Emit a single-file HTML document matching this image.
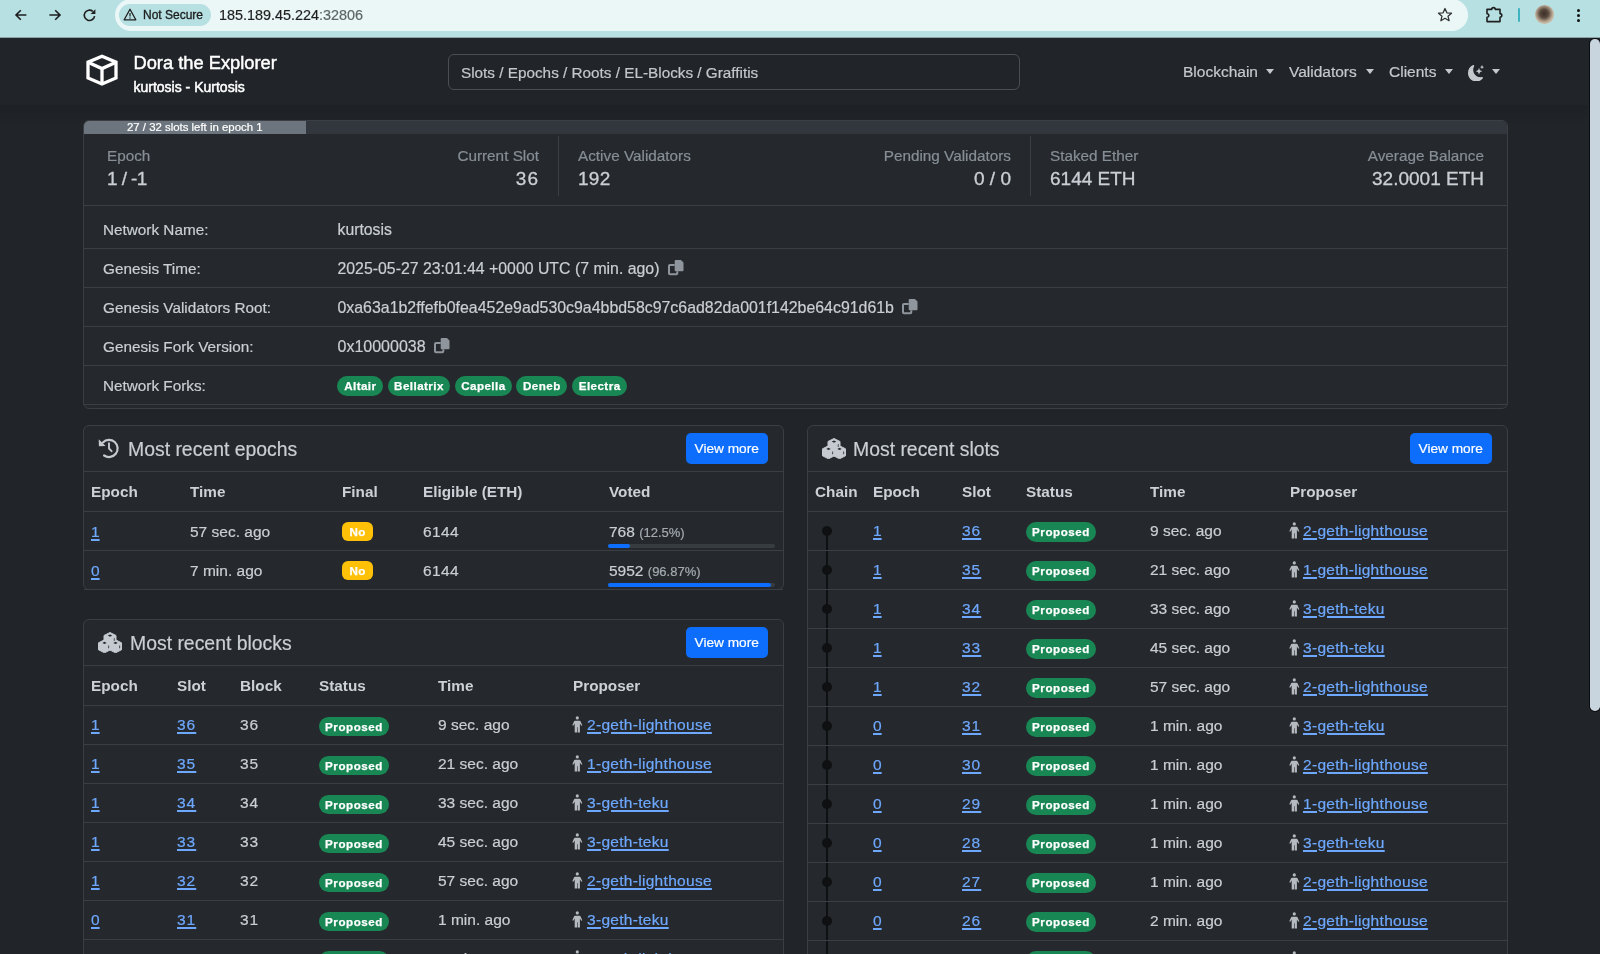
<!DOCTYPE html><html><head><meta charset="utf-8"><style>*{margin:0;padding:0;box-sizing:border-box}html,body{width:1600px;height:954px;overflow:hidden;background:#212529;font-family:"Liberation Sans",sans-serif}</style></head><body><div style="position:absolute;left:0;top:0;width:1600px;height:954px;will-change:transform">
<div style="position:absolute;left:0px;top:0px;width:1600px;height:38px;background:#b7e0e3;"></div>
<div style="position:absolute;left:115px;top:-1px;width:1353px;height:32px;background:#ebf7f7;border-radius:16px;"></div>
<div style="position:absolute;left:119px;top:4px;width:92px;height:22px;background:#b7e0e3;border-radius:11px;"></div>
<svg style="position:absolute;left:12px;top:6px" width="18" height="18" viewBox="0 0 18 18"><path d="M14.4 9H4M8.8 4.2L4 9l4.8 4.8" fill="none" stroke="#1f1f1f" stroke-width="1.6"/></svg>
<svg style="position:absolute;left:46px;top:6px" width="18" height="18" viewBox="0 0 18 18"><path d="M3.4 9h10.6M9.2 4.2L14 9l-4.8 4.8" fill="none" stroke="#1f1f1f" stroke-width="1.6"/></svg>
<svg style="position:absolute;left:80px;top:6px" width="18" height="18" viewBox="0 0 18 18"><path d="M14.6 10.2A5.2 5.2 0 1 1 12.84 5.32" fill="none" stroke="#1f1f1f" stroke-width="1.6"/><path d="M15.4 3.3V8.1H10.6Z" fill="#1f1f1f"/></svg>
<svg style="position:absolute;left:123px;top:8px" width="14" height="13" viewBox="0 0 14 13"><path d="M7 1.2L12.8 11.8H1.2Z" fill="none" stroke="#1f1f1f" stroke-width="1.3" stroke-linejoin="round"/><path d="M7 5v3.4" stroke="#1f1f1f" stroke-width="1.2"/><circle cx="7" cy="10" r=".7" fill="#1f1f1f"/></svg>
<div style="position:absolute;left:143px;top:7.84px;font-size:12px;line-height:15px;color:#1f1f1f;white-space:nowrap;-webkit-text-stroke:0.35px #1f1f1f;">Not Secure</div>
<div style="position:absolute;left:219px;top:6.01px;font-size:14.4px;line-height:18px;color:#1f1f1f;white-space:nowrap;-webkit-text-stroke-width:0.2px;">185.189.45.224<span style="color:#5d6566">:32806</span></div>
<svg style="position:absolute;left:1437px;top:7px" width="16" height="16" viewBox="0 0 16 16"><path d="M8 1.5l1.9 4.3 4.6.4-3.5 3 1.1 4.5L8 11.3 3.9 13.7 5 9.2 1.5 6.2l4.6-.4z" fill="none" stroke="#333" stroke-width="1.3" stroke-linejoin="round"/></svg>
<svg style="position:absolute;left:1485px;top:5px" width="18" height="18" viewBox="0 0 18 18"><path d="M2 4.4H6.7A1.8 1.8 0 0 1 10.3 4.4H15V8.6A1.8 1.8 0 0 1 15 12.2V16.6H2V12.3A1.8 1.8 0 0 0 2 8.7Z" fill="none" stroke="#1f1f1f" stroke-width="1.6" stroke-linejoin="round"/></svg>
<div style="position:absolute;left:1518px;top:8px;width:2px;height:14px;background:#3fb3bf;border-radius:1px;"></div>
<div style="position:absolute;left:1535px;top:5px;width:19px;height:19px;border-radius:50%;background:radial-gradient(circle at 48% 45%,#3b2f27 0,#5a4a3e 30%,#bfae98 60%,#e9dcc8 100%)"></div>
<div style="position:absolute;left:1577px;top:9px;width:3px;height:3px;background:#111;border-radius:50%;"></div>
<div style="position:absolute;left:1577px;top:14px;width:3px;height:3px;background:#111;border-radius:50%;"></div>
<div style="position:absolute;left:1577px;top:19px;width:3px;height:3px;background:#111;border-radius:50%;"></div>
<div style="position:absolute;left:0px;top:37px;width:1600px;height:1px;background:#8aa3a5;"></div>
<div style="position:absolute;left:0px;top:38px;width:1600px;height:67px;background:#212529;"></div>
<div style="position:absolute;left:0px;top:105px;width:1600px;height:21px;background:linear-gradient(#1d2024,#212529);"></div>
<svg style="position:absolute;left:85px;top:53px" width="34" height="34" viewBox="0 0 34 34"><path d="M17 3.2L31 9.2V25L17 31L3 25V9.2Z" fill="none" stroke="#fff" stroke-width="3.3" stroke-linejoin="miter"/><path d="M3.5 9.6L17 15.6L30.5 9.6M17 15.6V31" fill="none" stroke="#fff" stroke-width="3.3"/></svg>
<div style="position:absolute;left:133.5px;top:51.36px;font-size:18.3px;line-height:23px;color:#fff;white-space:nowrap;-webkit-text-stroke:0.45px #fff;">Dora the Explorer</div>
<div style="position:absolute;left:133.5px;top:77.65px;font-size:14px;line-height:18px;color:#fff;white-space:nowrap;-webkit-text-stroke:0.5px #fff;">kurtosis - Kurtosis</div>
<div style="position:absolute;left:448px;top:54px;width:572px;height:36px;background:#212529;border:1px solid #4a4f54;border-radius:6px;box-sizing:border-box;"></div>
<div style="position:absolute;left:461px;top:62.90px;font-size:15.3px;line-height:19px;color:#c3c8cd;white-space:nowrap;-webkit-text-stroke-width:0.2px;">Slots / Epochs / Roots / EL-Blocks / Graffitis</div>
<div style="position:absolute;left:1183px;top:62.03px;font-size:15.5px;line-height:19px;color:#c6c9cc;white-space:nowrap;-webkit-text-stroke-width:0.2px;">Blockchain</div>
<div style="position:absolute;left:1265.5px;top:68.5px;width:0;height:0;border-left:4.2px solid transparent;border-right:4.2px solid transparent;border-top:5px solid #c6c9cc"></div>
<div style="position:absolute;left:1289px;top:62.03px;font-size:15.5px;line-height:19px;color:#c6c9cc;white-space:nowrap;-webkit-text-stroke-width:0.2px;">Validators</div>
<div style="position:absolute;left:1365.5px;top:68.5px;width:0;height:0;border-left:4.2px solid transparent;border-right:4.2px solid transparent;border-top:5px solid #c6c9cc"></div>
<div style="position:absolute;left:1389px;top:62.03px;font-size:15.5px;line-height:19px;color:#c6c9cc;white-space:nowrap;-webkit-text-stroke-width:0.2px;">Clients</div>
<div style="position:absolute;left:1444.5px;top:68.5px;width:0;height:0;border-left:4.2px solid transparent;border-right:4.2px solid transparent;border-top:5px solid #c6c9cc"></div>
<svg style="position:absolute;left:1467.5px;top:64.8px" width="16" height="16.5" viewBox="0 0 16 16" preserveAspectRatio="none"><path d="M6 .278a.768.768 0 0 1 .08.858 7.208 7.208 0 0 0-.878 3.46c0 4.021 3.278 7.277 7.318 7.277.527 0 1.04-.055 1.533-.16a.787.787 0 0 1 .81.316.733.733 0 0 1-.031.893A8.349 8.349 0 0 1 8.344 16C3.734 16 0 12.286 0 7.71 0 4.266 2.114 1.312 5.124.06A.752.752 0 0 1 6 .278z" fill="#c6c9cc"/><path d="M10.794 3.148a.217.217 0 0 1 .412 0l.387 1.162c.173.518.579.924 1.097 1.097l1.162.387a.217.217 0 0 1 0 .412l-1.162.387a1.734 1.734 0 0 0-1.097 1.097l-.387 1.162a.217.217 0 0 1-.412 0l-.387-1.162A1.734 1.734 0 0 0 9.31 6.593l-1.162-.387a.217.217 0 0 1 0-.412l1.162-.387a1.734 1.734 0 0 0 1.097-1.097l.387-1.162zM13.863.099a.145.145 0 0 1 .274 0l.258.774c.115.346.386.617.732.732l.774.258a.145.145 0 0 1 0 .274l-.774.258a1.156 1.156 0 0 0-.732.732l-.258.774a.145.145 0 0 1-.274 0l-.258-.774a1.156 1.156 0 0 0-.732-.732l-.774-.258a.145.145 0 0 1 0-.274l.774-.258c.346-.115.617-.386.732-.732L13.863.1z" fill="#c6c9cc"/></svg>
<div style="position:absolute;left:1491.5px;top:68.5px;width:0;height:0;border-left:4.2px solid transparent;border-right:4.2px solid transparent;border-top:5px solid #c6c9cc"></div>
<div style="position:absolute;left:1588px;top:38px;width:12px;height:916px;background:#212529;"></div>
<div style="position:absolute;left:1590px;top:38.5px;width:9.6px;height:672.5px;background:#c8d4de;border-radius:4.8px;box-shadow:0 0 0 1px #0c0e10;"></div>
<div style="position:absolute;left:83px;top:120px;width:1425px;height:289px;background:#25292d;border:1px solid #3b3f44;border-radius:6px;overflow:hidden;box-sizing:border-box">
<div style="position:absolute;left:0;top:0;width:1425px;height:13px;background:#32373d"></div>
<div style="position:absolute;left:0;top:0;width:222px;height:13px;background:#6c757d"></div>
</div>
<div style="position:absolute;left:127px;top:120.05px;font-size:11.4px;line-height:14px;color:#fff;white-space:nowrap;-webkit-text-stroke-width:0.2px;">27 / 32 slots left in epoch 1</div>
<div style="position:absolute;left:107px;top:146.00px;font-size:15.3px;line-height:19px;color:#868e96;white-space:nowrap;-webkit-text-stroke-width:0.2px;">Epoch</div>
<div style="position:absolute;left:107px;top:166.61px;font-size:19px;line-height:24px;color:#c9cfd4;white-space:nowrap;-webkit-text-stroke:0.3px #ced4da;letter-spacing:-0.6px;">1 / -1</div>
<div style="position:absolute;right:1061px;top:146.00px;font-size:15.3px;line-height:19px;color:#868e96;white-space:nowrap;-webkit-text-stroke-width:0.2px;">Current Slot</div>
<div style="position:absolute;right:1061px;top:166.61px;font-size:19px;line-height:24px;color:#c9cfd4;white-space:nowrap;-webkit-text-stroke:0.3px #ced4da;letter-spacing:1px;">36</div>
<div style="position:absolute;left:558px;top:136px;width:1px;height:60px;background:#3b3f44;"></div>
<div style="position:absolute;left:578px;top:146.00px;font-size:15.3px;line-height:19px;color:#868e96;white-space:nowrap;-webkit-text-stroke-width:0.2px;">Active Validators</div>
<div style="position:absolute;left:578px;top:166.61px;font-size:19px;line-height:24px;color:#c9cfd4;white-space:nowrap;-webkit-text-stroke:0.3px #ced4da;letter-spacing:0.3px;">192</div>
<div style="position:absolute;right:589px;top:146.00px;font-size:15.3px;line-height:19px;color:#868e96;white-space:nowrap;-webkit-text-stroke-width:0.2px;">Pending Validators</div>
<div style="position:absolute;right:589px;top:166.61px;font-size:19px;line-height:24px;color:#c9cfd4;white-space:nowrap;-webkit-text-stroke:0.3px #ced4da;">0 / 0</div>
<div style="position:absolute;left:1030px;top:136px;width:1px;height:60px;background:#3b3f44;"></div>
<div style="position:absolute;left:1050px;top:146.00px;font-size:15.3px;line-height:19px;color:#868e96;white-space:nowrap;-webkit-text-stroke-width:0.2px;">Staked Ether</div>
<div style="position:absolute;left:1050px;top:166.61px;font-size:19px;line-height:24px;color:#c9cfd4;white-space:nowrap;-webkit-text-stroke:0.3px #ced4da;">6144 ETH</div>
<div style="position:absolute;right:116px;top:146.00px;font-size:15.3px;line-height:19px;color:#868e96;white-space:nowrap;-webkit-text-stroke-width:0.2px;">Average Balance</div>
<div style="position:absolute;right:116px;top:166.61px;font-size:19px;line-height:24px;color:#c9cfd4;white-space:nowrap;-webkit-text-stroke:0.3px #ced4da;">32.0001 ETH</div>
<div style="position:absolute;left:84px;top:205px;width:1423px;height:1px;background:#3b3f44;"></div>
<div style="position:absolute;left:84px;top:248px;width:1423px;height:1px;background:#3b3f44;"></div>
<div style="position:absolute;left:84px;top:287px;width:1423px;height:1px;background:#3b3f44;"></div>
<div style="position:absolute;left:84px;top:326px;width:1423px;height:1px;background:#3b3f44;"></div>
<div style="position:absolute;left:84px;top:365px;width:1423px;height:1px;background:#3b3f44;"></div>
<div style="position:absolute;left:84px;top:404px;width:1423px;height:1px;background:#3b3f44;"></div>
<div style="position:absolute;left:103px;top:219.60px;font-size:15.3px;line-height:19px;color:#c9cfd4;white-space:nowrap;-webkit-text-stroke-width:0.2px;">Network Name:</div>
<div style="position:absolute;left:337.5px;top:219.72px;font-size:15.8px;line-height:20px;color:#c9cfd4;white-space:nowrap;-webkit-text-stroke-width:0.2px;">kurtosis</div>
<div style="position:absolute;left:103px;top:258.60px;font-size:15.3px;line-height:19px;color:#c9cfd4;white-space:nowrap;-webkit-text-stroke-width:0.2px;">Genesis Time:</div>
<div style="position:absolute;left:337.5px;top:258.71px;font-size:15.85px;line-height:20px;color:#c9cfd4;white-space:nowrap;-webkit-text-stroke-width:0.2px;">2025-05-27 23:01:44 +0000 UTC (7 min. ago)</div>
<svg style="position:absolute;left:668px;top:260.3px" width="16" height="16" viewBox="0 0 16 16"><path d="M7.7 0H12.9L15.5 2.6V10.2A1 1 0 0 1 14.5 11.2H7.7A1 1 0 0 1 6.7 10.2V1A1 1 0 0 1 7.7 0Z" fill="#8e959c"/><path d="M6.7 4.9H2A1 1 0 0 0 1 5.9V13.2A1 1 0 0 0 2 14.2H8.3A1 1 0 0 0 9.3 13.2V11.2" fill="none" stroke="#8e959c" stroke-width="2"/></svg>
<div style="position:absolute;left:103px;top:297.60px;font-size:15.3px;line-height:19px;color:#c9cfd4;white-space:nowrap;-webkit-text-stroke-width:0.2px;">Genesis Validators Root:</div>
<div style="position:absolute;left:337.5px;top:297.69px;font-size:15.9px;line-height:20px;color:#c9cfd4;white-space:nowrap;-webkit-text-stroke-width:0.2px;">0xa63a1b2ffefb0fea452e9ad530c9a4bbd58c97c6ad82da001f142be64c91d61b</div>
<svg style="position:absolute;left:902px;top:299.2px" width="16" height="16" viewBox="0 0 16 16"><path d="M7.7 0H12.9L15.5 2.6V10.2A1 1 0 0 1 14.5 11.2H7.7A1 1 0 0 1 6.7 10.2V1A1 1 0 0 1 7.7 0Z" fill="#8e959c"/><path d="M6.7 4.9H2A1 1 0 0 0 1 5.9V13.2A1 1 0 0 0 2 14.2H8.3A1 1 0 0 0 9.3 13.2V11.2" fill="none" stroke="#8e959c" stroke-width="2"/></svg>
<div style="position:absolute;left:103px;top:336.60px;font-size:15.3px;line-height:19px;color:#c9cfd4;white-space:nowrap;-webkit-text-stroke-width:0.2px;">Genesis Fork Version:</div>
<div style="position:absolute;left:337.5px;top:336.65px;font-size:16px;line-height:20px;color:#c9cfd4;white-space:nowrap;-webkit-text-stroke-width:0.2px;">0x10000038</div>
<svg style="position:absolute;left:434px;top:338px" width="16" height="16" viewBox="0 0 16 16"><path d="M7.7 0H12.9L15.5 2.6V10.2A1 1 0 0 1 14.5 11.2H7.7A1 1 0 0 1 6.7 10.2V1A1 1 0 0 1 7.7 0Z" fill="#8e959c"/><path d="M6.7 4.9H2A1 1 0 0 0 1 5.9V13.2A1 1 0 0 0 2 14.2H8.3A1 1 0 0 0 9.3 13.2V11.2" fill="none" stroke="#8e959c" stroke-width="2"/></svg>
<div style="position:absolute;left:103px;top:375.60px;font-size:15.3px;line-height:19px;color:#c9cfd4;white-space:nowrap;-webkit-text-stroke-width:0.2px;">Network Forks:</div>
<div style="position:absolute;left:337.4px;top:376.4px;width:45.9px;height:19.5px;border-radius:10px;background:#198754;color:#fff;font-weight:bold;font-size:11.6px;line-height:19.5px;text-align:center;letter-spacing:0.45px;-webkit-text-stroke:0.25px #fff">Altair</div>
<div style="position:absolute;left:387.8px;top:376.4px;width:62.4px;height:19.5px;border-radius:10px;background:#198754;color:#fff;font-weight:bold;font-size:11.6px;line-height:19.5px;text-align:center;letter-spacing:0.45px;-webkit-text-stroke:0.25px #fff">Bellatrix</div>
<div style="position:absolute;left:454.6px;top:376.4px;width:57.6px;height:19.5px;border-radius:10px;background:#198754;color:#fff;font-weight:bold;font-size:11.6px;line-height:19.5px;text-align:center;letter-spacing:0.45px;-webkit-text-stroke:0.25px #fff">Capella</div>
<div style="position:absolute;left:516.4px;top:376.4px;width:51.0px;height:19.5px;border-radius:10px;background:#198754;color:#fff;font-weight:bold;font-size:11.6px;line-height:19.5px;text-align:center;letter-spacing:0.45px;-webkit-text-stroke:0.25px #fff">Deneb</div>
<div style="position:absolute;left:572.2px;top:376.4px;width:54.9px;height:19.5px;border-radius:10px;background:#198754;color:#fff;font-weight:bold;font-size:11.6px;line-height:19.5px;text-align:center;letter-spacing:0.45px;-webkit-text-stroke:0.25px #fff">Electra</div>
<div style="position:absolute;left:83px;top:425px;width:701px;height:165px;background:#25292d;border:1px solid #3b3f44;border-radius:6px;box-sizing:border-box"></div>
<svg style="position:absolute;left:97.5px;top:438px" width="22" height="22" viewBox="0 0 22 22"><path d="M4.9 4.4A8.6 8.6 0 1 1 6.1 17.5" fill="none" stroke="#c4cad0" stroke-width="2.2" stroke-linecap="round"/><path d="M0.7 1.3L0.9 8.2L7.6 8Z" fill="#c4cad0"/><path d="M11 5.3V10.5L13.6 13.2" fill="none" stroke="#c4cad0" stroke-width="1.9" stroke-linecap="round" stroke-linejoin="round"/></svg>
<div style="position:absolute;left:128px;top:436.67px;font-size:19.4px;line-height:24px;color:#c9cfd4;white-space:nowrap;-webkit-text-stroke-width:0.2px;">Most recent epochs</div>
<div style="position:absolute;left:686px;top:433px;width:82px;height:31px;border-radius:5px;background:#0d6efd"></div>
<div style="position:absolute;left:694.5px;top:440.15px;font-size:13.7px;line-height:17px;color:#fff;white-space:nowrap;-webkit-text-stroke:0.2px #fff;">View more</div>
<div style="position:absolute;left:84px;top:471px;width:699px;height:1px;background:#3b3f44;"></div>
<div style="position:absolute;left:91px;top:482.40px;font-size:15.3px;line-height:19px;color:#cbd1d6;font-weight:bold;white-space:nowrap;">Epoch</div>
<div style="position:absolute;left:190px;top:482.40px;font-size:15.3px;line-height:19px;color:#cbd1d6;font-weight:bold;white-space:nowrap;">Time</div>
<div style="position:absolute;left:342px;top:482.40px;font-size:15.3px;line-height:19px;color:#cbd1d6;font-weight:bold;white-space:nowrap;">Final</div>
<div style="position:absolute;left:423px;top:482.40px;font-size:15.3px;line-height:19px;color:#cbd1d6;font-weight:bold;white-space:nowrap;">Eligible (ETH)</div>
<div style="position:absolute;left:609px;top:482.40px;font-size:15.3px;line-height:19px;color:#cbd1d6;font-weight:bold;white-space:nowrap;">Voted</div>
<div style="position:absolute;left:84px;top:511px;width:699px;height:1px;background:#3b3f44;"></div>
<div style="position:absolute;left:84px;top:550px;width:699px;height:1px;background:#3b3f44;"></div>
<div style="position:absolute;left:84px;top:589px;width:699px;height:1px;background:#3b3f44;"></div>
<div style="position:absolute;left:91px;top:521.73px;font-size:15.5px;line-height:19px;color:#6ea8fe;white-space:nowrap;-webkit-text-stroke-width:0.2px;letter-spacing:0px;text-decoration:underline;text-underline-offset:1.5px;text-decoration-thickness:1.6px;">1</div>
<div style="position:absolute;left:190px;top:521.73px;font-size:15.5px;line-height:19px;color:#c9cfd4;white-space:nowrap;-webkit-text-stroke-width:0.2px;">57 sec. ago</div>
<div style="position:absolute;left:342px;top:521.7px;width:31px;height:19.5px;border-radius:6px;background:#ffc107;color:#fff;font-weight:bold;font-size:11.6px;line-height:19.5px;text-align:center;letter-spacing:0.3px;-webkit-text-stroke:0.25px #fff">No</div>
<div style="position:absolute;left:423px;top:521.73px;font-size:15.5px;line-height:19px;color:#c9cfd4;white-space:nowrap;-webkit-text-stroke-width:0.2px;letter-spacing:0.4px;">6144</div>
<div style="position:absolute;left:609px;top:521.73px;font-size:15.5px;line-height:19px;color:#c9cfd4;white-space:nowrap;-webkit-text-stroke-width:0.2px;">768 <span style="font-size:13px;color:#a4abb1">(12.5%)</span></div>
<div style="position:absolute;left:608px;top:544px;width:167px;height:4px;background:#373c41;border-radius:2px;"></div>
<div style="position:absolute;left:608px;top:544px;width:22px;height:4px;background:#0d6efd;border-radius:2px;"></div>
<div style="position:absolute;left:91px;top:560.73px;font-size:15.5px;line-height:19px;color:#6ea8fe;white-space:nowrap;-webkit-text-stroke-width:0.2px;letter-spacing:0px;text-decoration:underline;text-underline-offset:1.5px;text-decoration-thickness:1.6px;">0</div>
<div style="position:absolute;left:190px;top:560.73px;font-size:15.5px;line-height:19px;color:#c9cfd4;white-space:nowrap;-webkit-text-stroke-width:0.2px;">7 min. ago</div>
<div style="position:absolute;left:342px;top:560.7px;width:31px;height:19.5px;border-radius:6px;background:#ffc107;color:#fff;font-weight:bold;font-size:11.6px;line-height:19.5px;text-align:center;letter-spacing:0.3px;-webkit-text-stroke:0.25px #fff">No</div>
<div style="position:absolute;left:423px;top:560.73px;font-size:15.5px;line-height:19px;color:#c9cfd4;white-space:nowrap;-webkit-text-stroke-width:0.2px;letter-spacing:0.4px;">6144</div>
<div style="position:absolute;left:609px;top:560.73px;font-size:15.5px;line-height:19px;color:#c9cfd4;white-space:nowrap;-webkit-text-stroke-width:0.2px;">5952 <span style="font-size:13px;color:#a4abb1">(96.87%)</span></div>
<div style="position:absolute;left:608px;top:583px;width:167px;height:4px;background:#373c41;border-radius:2px;"></div>
<div style="position:absolute;left:608px;top:583px;width:163px;height:4px;background:#0d6efd;border-radius:2px;"></div>
<div style="position:absolute;left:83px;top:619px;width:701px;height:400px;background:#25292d;border:1px solid #3b3f44;border-radius:6px;box-sizing:border-box"></div>
<svg style="position:absolute;left:98px;top:632px" width="24" height="21" viewBox="-0.5 -0.5 24 21"><path d="M11.5 0L17.5 3V10L11.5 13L5.5 10V3ZM6 7.3L12 10.3V17.3L6 20.3L0 17.3V10.3ZM17 7.3L23 10.3V17.3L17 20.3L11 17.3V10.3Z" fill="#c4cad0" stroke="#c4cad0" stroke-width="1" stroke-linejoin="round"/><path d="M11.5 2L13.7 3.1L11.5 4.2L9.3 3.1Z" fill="#25292d"/><path d="M15.3 5.9L16.1 5.5V8.2L15.3 8.6Z" fill="#25292d"/><path d="M6 9.3L8.2 10.4L6 11.5L3.8 10.4Z" fill="#25292d"/><path d="M9.8 13.2L10.6 12.8V15.5L9.8 15.899999999999999Z" fill="#25292d"/><path d="M17 9.3L19.2 10.4L17 11.5L14.8 10.4Z" fill="#25292d"/><path d="M20.8 13.2L21.6 12.8V15.5L20.8 15.899999999999999Z" fill="#25292d"/></svg>
<div style="position:absolute;left:130px;top:630.67px;font-size:19.4px;line-height:24px;color:#c9cfd4;white-space:nowrap;-webkit-text-stroke-width:0.2px;">Most recent blocks</div>
<div style="position:absolute;left:686px;top:627px;width:82px;height:31px;border-radius:5px;background:#0d6efd"></div>
<div style="position:absolute;left:694.5px;top:634.15px;font-size:13.7px;line-height:17px;color:#fff;white-space:nowrap;-webkit-text-stroke:0.2px #fff;">View more</div>
<div style="position:absolute;left:84px;top:665px;width:699px;height:1px;background:#3b3f44;"></div>
<div style="position:absolute;left:91px;top:676.40px;font-size:15.3px;line-height:19px;color:#cbd1d6;font-weight:bold;white-space:nowrap;">Epoch</div>
<div style="position:absolute;left:177px;top:676.40px;font-size:15.3px;line-height:19px;color:#cbd1d6;font-weight:bold;white-space:nowrap;">Slot</div>
<div style="position:absolute;left:240px;top:676.40px;font-size:15.3px;line-height:19px;color:#cbd1d6;font-weight:bold;white-space:nowrap;">Block</div>
<div style="position:absolute;left:319px;top:676.40px;font-size:15.3px;line-height:19px;color:#cbd1d6;font-weight:bold;white-space:nowrap;">Status</div>
<div style="position:absolute;left:438px;top:676.40px;font-size:15.3px;line-height:19px;color:#cbd1d6;font-weight:bold;white-space:nowrap;">Time</div>
<div style="position:absolute;left:573px;top:676.40px;font-size:15.3px;line-height:19px;color:#cbd1d6;font-weight:bold;white-space:nowrap;">Proposer</div>
<div style="position:absolute;left:84px;top:705px;width:699px;height:1px;background:#3b3f44;"></div>
<div style="position:absolute;left:91px;top:715.13px;font-size:15.5px;line-height:19px;color:#6ea8fe;white-space:nowrap;-webkit-text-stroke-width:0.2px;letter-spacing:0px;text-decoration:underline;text-underline-offset:1.5px;text-decoration-thickness:1.6px;">1</div>
<div style="position:absolute;left:177px;top:715.13px;font-size:15.5px;line-height:19px;color:#6ea8fe;white-space:nowrap;-webkit-text-stroke-width:0.2px;letter-spacing:1px;text-decoration:underline;text-underline-offset:1.5px;text-decoration-thickness:1.6px;">36</div>
<div style="position:absolute;left:240px;top:715.13px;font-size:15.5px;line-height:19px;color:#c9cfd4;white-space:nowrap;-webkit-text-stroke-width:0.2px;letter-spacing:1px;">36</div>
<div style="position:absolute;left:319px;top:716.5px;width:70px;height:19.5px;border-radius:10px;background:#198754;color:#fff;font-weight:bold;font-size:11.6px;line-height:19.5px;text-align:center;letter-spacing:0.55px;-webkit-text-stroke:0.25px #fff">Proposed</div>
<div style="position:absolute;left:438px;top:715.13px;font-size:15.5px;line-height:19px;color:#c9cfd4;white-space:nowrap;-webkit-text-stroke-width:0.2px;">9 sec. ago</div>
<svg style="position:absolute;left:572px;top:715.5px" width="11" height="17" viewBox="0 0 11 17"><circle cx="5.3" cy="1.9" r="1.6" fill="#b4bac0"/><path d="M3 4.8H7.6C8.1 4.8 8.4 5.1 8.6 5.5L10.3 9.2L9.3 9.8L7.9 7.6V16.4H5.6V11.2H5V16.4H2.7V7.6L1.3 9.8L0.3 9.2L2 5.5C2.2 5.1 2.5 4.8 3 4.8Z" fill="#b4bac0"/></svg>
<div style="position:absolute;left:587px;top:715.13px;font-size:15.5px;line-height:19px;color:#6ea8fe;white-space:nowrap;-webkit-text-stroke-width:0.2px;letter-spacing:0.3px;text-decoration:underline;text-underline-offset:1.5px;text-decoration-thickness:1.6px;">2-geth-lighthouse</div>
<div style="position:absolute;left:84px;top:744px;width:699px;height:1px;background:#3b3f44;"></div>
<div style="position:absolute;left:91px;top:754.13px;font-size:15.5px;line-height:19px;color:#6ea8fe;white-space:nowrap;-webkit-text-stroke-width:0.2px;letter-spacing:0px;text-decoration:underline;text-underline-offset:1.5px;text-decoration-thickness:1.6px;">1</div>
<div style="position:absolute;left:177px;top:754.13px;font-size:15.5px;line-height:19px;color:#6ea8fe;white-space:nowrap;-webkit-text-stroke-width:0.2px;letter-spacing:1px;text-decoration:underline;text-underline-offset:1.5px;text-decoration-thickness:1.6px;">35</div>
<div style="position:absolute;left:240px;top:754.13px;font-size:15.5px;line-height:19px;color:#c9cfd4;white-space:nowrap;-webkit-text-stroke-width:0.2px;letter-spacing:1px;">35</div>
<div style="position:absolute;left:319px;top:755.5px;width:70px;height:19.5px;border-radius:10px;background:#198754;color:#fff;font-weight:bold;font-size:11.6px;line-height:19.5px;text-align:center;letter-spacing:0.55px;-webkit-text-stroke:0.25px #fff">Proposed</div>
<div style="position:absolute;left:438px;top:754.13px;font-size:15.5px;line-height:19px;color:#c9cfd4;white-space:nowrap;-webkit-text-stroke-width:0.2px;">21 sec. ago</div>
<svg style="position:absolute;left:572px;top:754.5px" width="11" height="17" viewBox="0 0 11 17"><circle cx="5.3" cy="1.9" r="1.6" fill="#b4bac0"/><path d="M3 4.8H7.6C8.1 4.8 8.4 5.1 8.6 5.5L10.3 9.2L9.3 9.8L7.9 7.6V16.4H5.6V11.2H5V16.4H2.7V7.6L1.3 9.8L0.3 9.2L2 5.5C2.2 5.1 2.5 4.8 3 4.8Z" fill="#b4bac0"/></svg>
<div style="position:absolute;left:587px;top:754.13px;font-size:15.5px;line-height:19px;color:#6ea8fe;white-space:nowrap;-webkit-text-stroke-width:0.2px;letter-spacing:0.3px;text-decoration:underline;text-underline-offset:1.5px;text-decoration-thickness:1.6px;">1-geth-lighthouse</div>
<div style="position:absolute;left:84px;top:783px;width:699px;height:1px;background:#3b3f44;"></div>
<div style="position:absolute;left:91px;top:793.13px;font-size:15.5px;line-height:19px;color:#6ea8fe;white-space:nowrap;-webkit-text-stroke-width:0.2px;letter-spacing:0px;text-decoration:underline;text-underline-offset:1.5px;text-decoration-thickness:1.6px;">1</div>
<div style="position:absolute;left:177px;top:793.13px;font-size:15.5px;line-height:19px;color:#6ea8fe;white-space:nowrap;-webkit-text-stroke-width:0.2px;letter-spacing:1px;text-decoration:underline;text-underline-offset:1.5px;text-decoration-thickness:1.6px;">34</div>
<div style="position:absolute;left:240px;top:793.13px;font-size:15.5px;line-height:19px;color:#c9cfd4;white-space:nowrap;-webkit-text-stroke-width:0.2px;letter-spacing:1px;">34</div>
<div style="position:absolute;left:319px;top:794.5px;width:70px;height:19.5px;border-radius:10px;background:#198754;color:#fff;font-weight:bold;font-size:11.6px;line-height:19.5px;text-align:center;letter-spacing:0.55px;-webkit-text-stroke:0.25px #fff">Proposed</div>
<div style="position:absolute;left:438px;top:793.13px;font-size:15.5px;line-height:19px;color:#c9cfd4;white-space:nowrap;-webkit-text-stroke-width:0.2px;">33 sec. ago</div>
<svg style="position:absolute;left:572px;top:793.5px" width="11" height="17" viewBox="0 0 11 17"><circle cx="5.3" cy="1.9" r="1.6" fill="#b4bac0"/><path d="M3 4.8H7.6C8.1 4.8 8.4 5.1 8.6 5.5L10.3 9.2L9.3 9.8L7.9 7.6V16.4H5.6V11.2H5V16.4H2.7V7.6L1.3 9.8L0.3 9.2L2 5.5C2.2 5.1 2.5 4.8 3 4.8Z" fill="#b4bac0"/></svg>
<div style="position:absolute;left:587px;top:793.13px;font-size:15.5px;line-height:19px;color:#6ea8fe;white-space:nowrap;-webkit-text-stroke-width:0.2px;letter-spacing:0.3px;text-decoration:underline;text-underline-offset:1.5px;text-decoration-thickness:1.6px;">3-geth-teku</div>
<div style="position:absolute;left:84px;top:822px;width:699px;height:1px;background:#3b3f44;"></div>
<div style="position:absolute;left:91px;top:832.13px;font-size:15.5px;line-height:19px;color:#6ea8fe;white-space:nowrap;-webkit-text-stroke-width:0.2px;letter-spacing:0px;text-decoration:underline;text-underline-offset:1.5px;text-decoration-thickness:1.6px;">1</div>
<div style="position:absolute;left:177px;top:832.13px;font-size:15.5px;line-height:19px;color:#6ea8fe;white-space:nowrap;-webkit-text-stroke-width:0.2px;letter-spacing:1px;text-decoration:underline;text-underline-offset:1.5px;text-decoration-thickness:1.6px;">33</div>
<div style="position:absolute;left:240px;top:832.13px;font-size:15.5px;line-height:19px;color:#c9cfd4;white-space:nowrap;-webkit-text-stroke-width:0.2px;letter-spacing:1px;">33</div>
<div style="position:absolute;left:319px;top:833.5px;width:70px;height:19.5px;border-radius:10px;background:#198754;color:#fff;font-weight:bold;font-size:11.6px;line-height:19.5px;text-align:center;letter-spacing:0.55px;-webkit-text-stroke:0.25px #fff">Proposed</div>
<div style="position:absolute;left:438px;top:832.13px;font-size:15.5px;line-height:19px;color:#c9cfd4;white-space:nowrap;-webkit-text-stroke-width:0.2px;">45 sec. ago</div>
<svg style="position:absolute;left:572px;top:832.5px" width="11" height="17" viewBox="0 0 11 17"><circle cx="5.3" cy="1.9" r="1.6" fill="#b4bac0"/><path d="M3 4.8H7.6C8.1 4.8 8.4 5.1 8.6 5.5L10.3 9.2L9.3 9.8L7.9 7.6V16.4H5.6V11.2H5V16.4H2.7V7.6L1.3 9.8L0.3 9.2L2 5.5C2.2 5.1 2.5 4.8 3 4.8Z" fill="#b4bac0"/></svg>
<div style="position:absolute;left:587px;top:832.13px;font-size:15.5px;line-height:19px;color:#6ea8fe;white-space:nowrap;-webkit-text-stroke-width:0.2px;letter-spacing:0.3px;text-decoration:underline;text-underline-offset:1.5px;text-decoration-thickness:1.6px;">3-geth-teku</div>
<div style="position:absolute;left:84px;top:861px;width:699px;height:1px;background:#3b3f44;"></div>
<div style="position:absolute;left:91px;top:871.13px;font-size:15.5px;line-height:19px;color:#6ea8fe;white-space:nowrap;-webkit-text-stroke-width:0.2px;letter-spacing:0px;text-decoration:underline;text-underline-offset:1.5px;text-decoration-thickness:1.6px;">1</div>
<div style="position:absolute;left:177px;top:871.13px;font-size:15.5px;line-height:19px;color:#6ea8fe;white-space:nowrap;-webkit-text-stroke-width:0.2px;letter-spacing:1px;text-decoration:underline;text-underline-offset:1.5px;text-decoration-thickness:1.6px;">32</div>
<div style="position:absolute;left:240px;top:871.13px;font-size:15.5px;line-height:19px;color:#c9cfd4;white-space:nowrap;-webkit-text-stroke-width:0.2px;letter-spacing:1px;">32</div>
<div style="position:absolute;left:319px;top:872.5px;width:70px;height:19.5px;border-radius:10px;background:#198754;color:#fff;font-weight:bold;font-size:11.6px;line-height:19.5px;text-align:center;letter-spacing:0.55px;-webkit-text-stroke:0.25px #fff">Proposed</div>
<div style="position:absolute;left:438px;top:871.13px;font-size:15.5px;line-height:19px;color:#c9cfd4;white-space:nowrap;-webkit-text-stroke-width:0.2px;">57 sec. ago</div>
<svg style="position:absolute;left:572px;top:871.5px" width="11" height="17" viewBox="0 0 11 17"><circle cx="5.3" cy="1.9" r="1.6" fill="#b4bac0"/><path d="M3 4.8H7.6C8.1 4.8 8.4 5.1 8.6 5.5L10.3 9.2L9.3 9.8L7.9 7.6V16.4H5.6V11.2H5V16.4H2.7V7.6L1.3 9.8L0.3 9.2L2 5.5C2.2 5.1 2.5 4.8 3 4.8Z" fill="#b4bac0"/></svg>
<div style="position:absolute;left:587px;top:871.13px;font-size:15.5px;line-height:19px;color:#6ea8fe;white-space:nowrap;-webkit-text-stroke-width:0.2px;letter-spacing:0.3px;text-decoration:underline;text-underline-offset:1.5px;text-decoration-thickness:1.6px;">2-geth-lighthouse</div>
<div style="position:absolute;left:84px;top:900px;width:699px;height:1px;background:#3b3f44;"></div>
<div style="position:absolute;left:91px;top:910.13px;font-size:15.5px;line-height:19px;color:#6ea8fe;white-space:nowrap;-webkit-text-stroke-width:0.2px;letter-spacing:0px;text-decoration:underline;text-underline-offset:1.5px;text-decoration-thickness:1.6px;">0</div>
<div style="position:absolute;left:177px;top:910.13px;font-size:15.5px;line-height:19px;color:#6ea8fe;white-space:nowrap;-webkit-text-stroke-width:0.2px;letter-spacing:1px;text-decoration:underline;text-underline-offset:1.5px;text-decoration-thickness:1.6px;">31</div>
<div style="position:absolute;left:240px;top:910.13px;font-size:15.5px;line-height:19px;color:#c9cfd4;white-space:nowrap;-webkit-text-stroke-width:0.2px;letter-spacing:1px;">31</div>
<div style="position:absolute;left:319px;top:911.5px;width:70px;height:19.5px;border-radius:10px;background:#198754;color:#fff;font-weight:bold;font-size:11.6px;line-height:19.5px;text-align:center;letter-spacing:0.55px;-webkit-text-stroke:0.25px #fff">Proposed</div>
<div style="position:absolute;left:438px;top:910.13px;font-size:15.5px;line-height:19px;color:#c9cfd4;white-space:nowrap;-webkit-text-stroke-width:0.2px;">1 min. ago</div>
<svg style="position:absolute;left:572px;top:910.5px" width="11" height="17" viewBox="0 0 11 17"><circle cx="5.3" cy="1.9" r="1.6" fill="#b4bac0"/><path d="M3 4.8H7.6C8.1 4.8 8.4 5.1 8.6 5.5L10.3 9.2L9.3 9.8L7.9 7.6V16.4H5.6V11.2H5V16.4H2.7V7.6L1.3 9.8L0.3 9.2L2 5.5C2.2 5.1 2.5 4.8 3 4.8Z" fill="#b4bac0"/></svg>
<div style="position:absolute;left:587px;top:910.13px;font-size:15.5px;line-height:19px;color:#6ea8fe;white-space:nowrap;-webkit-text-stroke-width:0.2px;letter-spacing:0.3px;text-decoration:underline;text-underline-offset:1.5px;text-decoration-thickness:1.6px;">3-geth-teku</div>
<div style="position:absolute;left:84px;top:939px;width:699px;height:1px;background:#3b3f44;"></div>
<div style="position:absolute;left:91px;top:949.13px;font-size:15.5px;line-height:19px;color:#6ea8fe;white-space:nowrap;-webkit-text-stroke-width:0.2px;letter-spacing:0px;text-decoration:underline;text-underline-offset:1.5px;text-decoration-thickness:1.6px;">0</div>
<div style="position:absolute;left:177px;top:949.13px;font-size:15.5px;line-height:19px;color:#6ea8fe;white-space:nowrap;-webkit-text-stroke-width:0.2px;letter-spacing:1px;text-decoration:underline;text-underline-offset:1.5px;text-decoration-thickness:1.6px;">30</div>
<div style="position:absolute;left:240px;top:949.13px;font-size:15.5px;line-height:19px;color:#c9cfd4;white-space:nowrap;-webkit-text-stroke-width:0.2px;letter-spacing:1px;">30</div>
<div style="position:absolute;left:319px;top:950.5px;width:70px;height:19.5px;border-radius:10px;background:#198754;color:#fff;font-weight:bold;font-size:11.6px;line-height:19.5px;text-align:center;letter-spacing:0.55px;-webkit-text-stroke:0.25px #fff">Proposed</div>
<div style="position:absolute;left:438px;top:949.13px;font-size:15.5px;line-height:19px;color:#c9cfd4;white-space:nowrap;-webkit-text-stroke-width:0.2px;">1 min. ago</div>
<svg style="position:absolute;left:572px;top:949.5px" width="11" height="17" viewBox="0 0 11 17"><circle cx="5.3" cy="1.9" r="1.6" fill="#b4bac0"/><path d="M3 4.8H7.6C8.1 4.8 8.4 5.1 8.6 5.5L10.3 9.2L9.3 9.8L7.9 7.6V16.4H5.6V11.2H5V16.4H2.7V7.6L1.3 9.8L0.3 9.2L2 5.5C2.2 5.1 2.5 4.8 3 4.8Z" fill="#b4bac0"/></svg>
<div style="position:absolute;left:587px;top:949.13px;font-size:15.5px;line-height:19px;color:#6ea8fe;white-space:nowrap;-webkit-text-stroke-width:0.2px;letter-spacing:0.3px;text-decoration:underline;text-underline-offset:1.5px;text-decoration-thickness:1.6px;">2-geth-lighthouse</div>
<div style="position:absolute;left:807px;top:425px;width:701px;height:600px;background:#25292d;border:1px solid #3b3f44;border-radius:6px;box-sizing:border-box"></div>
<svg style="position:absolute;left:822px;top:438px" width="24" height="21" viewBox="-0.5 -0.5 24 21"><path d="M11.5 0L17.5 3V10L11.5 13L5.5 10V3ZM6 7.3L12 10.3V17.3L6 20.3L0 17.3V10.3ZM17 7.3L23 10.3V17.3L17 20.3L11 17.3V10.3Z" fill="#c4cad0" stroke="#c4cad0" stroke-width="1" stroke-linejoin="round"/><path d="M11.5 2L13.7 3.1L11.5 4.2L9.3 3.1Z" fill="#25292d"/><path d="M15.3 5.9L16.1 5.5V8.2L15.3 8.6Z" fill="#25292d"/><path d="M6 9.3L8.2 10.4L6 11.5L3.8 10.4Z" fill="#25292d"/><path d="M9.8 13.2L10.6 12.8V15.5L9.8 15.899999999999999Z" fill="#25292d"/><path d="M17 9.3L19.2 10.4L17 11.5L14.8 10.4Z" fill="#25292d"/><path d="M20.8 13.2L21.6 12.8V15.5L20.8 15.899999999999999Z" fill="#25292d"/></svg>
<div style="position:absolute;left:853px;top:436.67px;font-size:19.4px;line-height:24px;color:#c9cfd4;white-space:nowrap;-webkit-text-stroke-width:0.2px;">Most recent slots</div>
<div style="position:absolute;left:1410px;top:433px;width:82px;height:31px;border-radius:5px;background:#0d6efd"></div>
<div style="position:absolute;left:1418.5px;top:440.15px;font-size:13.7px;line-height:17px;color:#fff;white-space:nowrap;-webkit-text-stroke:0.2px #fff;">View more</div>
<div style="position:absolute;left:808px;top:471px;width:699px;height:1px;background:#3b3f44;"></div>
<div style="position:absolute;left:815px;top:482.40px;font-size:15.3px;line-height:19px;color:#cbd1d6;font-weight:bold;white-space:nowrap;">Chain</div>
<div style="position:absolute;left:873px;top:482.40px;font-size:15.3px;line-height:19px;color:#cbd1d6;font-weight:bold;white-space:nowrap;">Epoch</div>
<div style="position:absolute;left:962px;top:482.40px;font-size:15.3px;line-height:19px;color:#cbd1d6;font-weight:bold;white-space:nowrap;">Slot</div>
<div style="position:absolute;left:1026px;top:482.40px;font-size:15.3px;line-height:19px;color:#cbd1d6;font-weight:bold;white-space:nowrap;">Status</div>
<div style="position:absolute;left:1150px;top:482.40px;font-size:15.3px;line-height:19px;color:#cbd1d6;font-weight:bold;white-space:nowrap;">Time</div>
<div style="position:absolute;left:1290px;top:482.40px;font-size:15.3px;line-height:19px;color:#cbd1d6;font-weight:bold;white-space:nowrap;">Proposer</div>
<div style="position:absolute;left:826px;top:530px;width:2px;height:424px;background:#0e1012;"></div>
<div style="position:absolute;left:808px;top:511px;width:699px;height:1px;background:#3b3f44;"></div>
<div style="position:absolute;left:822px;top:525.5px;width:10px;height:10px;border-radius:50%;background:#0e1012"></div>
<div style="position:absolute;left:873px;top:521.13px;font-size:15.5px;line-height:19px;color:#6ea8fe;white-space:nowrap;-webkit-text-stroke-width:0.2px;letter-spacing:0px;text-decoration:underline;text-underline-offset:1.5px;text-decoration-thickness:1.6px;">1</div>
<div style="position:absolute;left:962px;top:521.13px;font-size:15.5px;line-height:19px;color:#6ea8fe;white-space:nowrap;-webkit-text-stroke-width:0.2px;letter-spacing:1px;text-decoration:underline;text-underline-offset:1.5px;text-decoration-thickness:1.6px;">36</div>
<div style="position:absolute;left:1026px;top:522.2px;width:70px;height:19.5px;border-radius:10px;background:#198754;color:#fff;font-weight:bold;font-size:11.6px;line-height:19.5px;text-align:center;letter-spacing:0.55px;-webkit-text-stroke:0.25px #fff">Proposed</div>
<div style="position:absolute;left:1150px;top:521.13px;font-size:15.5px;line-height:19px;color:#c9cfd4;white-space:nowrap;-webkit-text-stroke-width:0.2px;">9 sec. ago</div>
<svg style="position:absolute;left:1289px;top:521.6px" width="11" height="17" viewBox="0 0 11 17"><circle cx="5.3" cy="1.9" r="1.6" fill="#b4bac0"/><path d="M3 4.8H7.6C8.1 4.8 8.4 5.1 8.6 5.5L10.3 9.2L9.3 9.8L7.9 7.6V16.4H5.6V11.2H5V16.4H2.7V7.6L1.3 9.8L0.3 9.2L2 5.5C2.2 5.1 2.5 4.8 3 4.8Z" fill="#b4bac0"/></svg>
<div style="position:absolute;left:1303px;top:521.13px;font-size:15.5px;line-height:19px;color:#6ea8fe;white-space:nowrap;-webkit-text-stroke-width:0.2px;letter-spacing:0.3px;text-decoration:underline;text-underline-offset:1.5px;text-decoration-thickness:1.6px;">2-geth-lighthouse</div>
<div style="position:absolute;left:808px;top:550px;width:699px;height:1px;background:#3b3f44;"></div>
<div style="position:absolute;left:822px;top:564.5px;width:10px;height:10px;border-radius:50%;background:#0e1012"></div>
<div style="position:absolute;left:873px;top:560.13px;font-size:15.5px;line-height:19px;color:#6ea8fe;white-space:nowrap;-webkit-text-stroke-width:0.2px;letter-spacing:0px;text-decoration:underline;text-underline-offset:1.5px;text-decoration-thickness:1.6px;">1</div>
<div style="position:absolute;left:962px;top:560.13px;font-size:15.5px;line-height:19px;color:#6ea8fe;white-space:nowrap;-webkit-text-stroke-width:0.2px;letter-spacing:1px;text-decoration:underline;text-underline-offset:1.5px;text-decoration-thickness:1.6px;">35</div>
<div style="position:absolute;left:1026px;top:561.2px;width:70px;height:19.5px;border-radius:10px;background:#198754;color:#fff;font-weight:bold;font-size:11.6px;line-height:19.5px;text-align:center;letter-spacing:0.55px;-webkit-text-stroke:0.25px #fff">Proposed</div>
<div style="position:absolute;left:1150px;top:560.13px;font-size:15.5px;line-height:19px;color:#c9cfd4;white-space:nowrap;-webkit-text-stroke-width:0.2px;">21 sec. ago</div>
<svg style="position:absolute;left:1289px;top:560.6px" width="11" height="17" viewBox="0 0 11 17"><circle cx="5.3" cy="1.9" r="1.6" fill="#b4bac0"/><path d="M3 4.8H7.6C8.1 4.8 8.4 5.1 8.6 5.5L10.3 9.2L9.3 9.8L7.9 7.6V16.4H5.6V11.2H5V16.4H2.7V7.6L1.3 9.8L0.3 9.2L2 5.5C2.2 5.1 2.5 4.8 3 4.8Z" fill="#b4bac0"/></svg>
<div style="position:absolute;left:1303px;top:560.13px;font-size:15.5px;line-height:19px;color:#6ea8fe;white-space:nowrap;-webkit-text-stroke-width:0.2px;letter-spacing:0.3px;text-decoration:underline;text-underline-offset:1.5px;text-decoration-thickness:1.6px;">1-geth-lighthouse</div>
<div style="position:absolute;left:808px;top:589px;width:699px;height:1px;background:#3b3f44;"></div>
<div style="position:absolute;left:822px;top:603.5px;width:10px;height:10px;border-radius:50%;background:#0e1012"></div>
<div style="position:absolute;left:873px;top:599.13px;font-size:15.5px;line-height:19px;color:#6ea8fe;white-space:nowrap;-webkit-text-stroke-width:0.2px;letter-spacing:0px;text-decoration:underline;text-underline-offset:1.5px;text-decoration-thickness:1.6px;">1</div>
<div style="position:absolute;left:962px;top:599.13px;font-size:15.5px;line-height:19px;color:#6ea8fe;white-space:nowrap;-webkit-text-stroke-width:0.2px;letter-spacing:1px;text-decoration:underline;text-underline-offset:1.5px;text-decoration-thickness:1.6px;">34</div>
<div style="position:absolute;left:1026px;top:600.2px;width:70px;height:19.5px;border-radius:10px;background:#198754;color:#fff;font-weight:bold;font-size:11.6px;line-height:19.5px;text-align:center;letter-spacing:0.55px;-webkit-text-stroke:0.25px #fff">Proposed</div>
<div style="position:absolute;left:1150px;top:599.13px;font-size:15.5px;line-height:19px;color:#c9cfd4;white-space:nowrap;-webkit-text-stroke-width:0.2px;">33 sec. ago</div>
<svg style="position:absolute;left:1289px;top:599.6px" width="11" height="17" viewBox="0 0 11 17"><circle cx="5.3" cy="1.9" r="1.6" fill="#b4bac0"/><path d="M3 4.8H7.6C8.1 4.8 8.4 5.1 8.6 5.5L10.3 9.2L9.3 9.8L7.9 7.6V16.4H5.6V11.2H5V16.4H2.7V7.6L1.3 9.8L0.3 9.2L2 5.5C2.2 5.1 2.5 4.8 3 4.8Z" fill="#b4bac0"/></svg>
<div style="position:absolute;left:1303px;top:599.13px;font-size:15.5px;line-height:19px;color:#6ea8fe;white-space:nowrap;-webkit-text-stroke-width:0.2px;letter-spacing:0.3px;text-decoration:underline;text-underline-offset:1.5px;text-decoration-thickness:1.6px;">3-geth-teku</div>
<div style="position:absolute;left:808px;top:628px;width:699px;height:1px;background:#3b3f44;"></div>
<div style="position:absolute;left:822px;top:642.5px;width:10px;height:10px;border-radius:50%;background:#0e1012"></div>
<div style="position:absolute;left:873px;top:638.13px;font-size:15.5px;line-height:19px;color:#6ea8fe;white-space:nowrap;-webkit-text-stroke-width:0.2px;letter-spacing:0px;text-decoration:underline;text-underline-offset:1.5px;text-decoration-thickness:1.6px;">1</div>
<div style="position:absolute;left:962px;top:638.13px;font-size:15.5px;line-height:19px;color:#6ea8fe;white-space:nowrap;-webkit-text-stroke-width:0.2px;letter-spacing:1px;text-decoration:underline;text-underline-offset:1.5px;text-decoration-thickness:1.6px;">33</div>
<div style="position:absolute;left:1026px;top:639.2px;width:70px;height:19.5px;border-radius:10px;background:#198754;color:#fff;font-weight:bold;font-size:11.6px;line-height:19.5px;text-align:center;letter-spacing:0.55px;-webkit-text-stroke:0.25px #fff">Proposed</div>
<div style="position:absolute;left:1150px;top:638.13px;font-size:15.5px;line-height:19px;color:#c9cfd4;white-space:nowrap;-webkit-text-stroke-width:0.2px;">45 sec. ago</div>
<svg style="position:absolute;left:1289px;top:638.6px" width="11" height="17" viewBox="0 0 11 17"><circle cx="5.3" cy="1.9" r="1.6" fill="#b4bac0"/><path d="M3 4.8H7.6C8.1 4.8 8.4 5.1 8.6 5.5L10.3 9.2L9.3 9.8L7.9 7.6V16.4H5.6V11.2H5V16.4H2.7V7.6L1.3 9.8L0.3 9.2L2 5.5C2.2 5.1 2.5 4.8 3 4.8Z" fill="#b4bac0"/></svg>
<div style="position:absolute;left:1303px;top:638.13px;font-size:15.5px;line-height:19px;color:#6ea8fe;white-space:nowrap;-webkit-text-stroke-width:0.2px;letter-spacing:0.3px;text-decoration:underline;text-underline-offset:1.5px;text-decoration-thickness:1.6px;">3-geth-teku</div>
<div style="position:absolute;left:808px;top:667px;width:699px;height:1px;background:#3b3f44;"></div>
<div style="position:absolute;left:822px;top:681.5px;width:10px;height:10px;border-radius:50%;background:#0e1012"></div>
<div style="position:absolute;left:873px;top:677.13px;font-size:15.5px;line-height:19px;color:#6ea8fe;white-space:nowrap;-webkit-text-stroke-width:0.2px;letter-spacing:0px;text-decoration:underline;text-underline-offset:1.5px;text-decoration-thickness:1.6px;">1</div>
<div style="position:absolute;left:962px;top:677.13px;font-size:15.5px;line-height:19px;color:#6ea8fe;white-space:nowrap;-webkit-text-stroke-width:0.2px;letter-spacing:1px;text-decoration:underline;text-underline-offset:1.5px;text-decoration-thickness:1.6px;">32</div>
<div style="position:absolute;left:1026px;top:678.2px;width:70px;height:19.5px;border-radius:10px;background:#198754;color:#fff;font-weight:bold;font-size:11.6px;line-height:19.5px;text-align:center;letter-spacing:0.55px;-webkit-text-stroke:0.25px #fff">Proposed</div>
<div style="position:absolute;left:1150px;top:677.13px;font-size:15.5px;line-height:19px;color:#c9cfd4;white-space:nowrap;-webkit-text-stroke-width:0.2px;">57 sec. ago</div>
<svg style="position:absolute;left:1289px;top:677.6px" width="11" height="17" viewBox="0 0 11 17"><circle cx="5.3" cy="1.9" r="1.6" fill="#b4bac0"/><path d="M3 4.8H7.6C8.1 4.8 8.4 5.1 8.6 5.5L10.3 9.2L9.3 9.8L7.9 7.6V16.4H5.6V11.2H5V16.4H2.7V7.6L1.3 9.8L0.3 9.2L2 5.5C2.2 5.1 2.5 4.8 3 4.8Z" fill="#b4bac0"/></svg>
<div style="position:absolute;left:1303px;top:677.13px;font-size:15.5px;line-height:19px;color:#6ea8fe;white-space:nowrap;-webkit-text-stroke-width:0.2px;letter-spacing:0.3px;text-decoration:underline;text-underline-offset:1.5px;text-decoration-thickness:1.6px;">2-geth-lighthouse</div>
<div style="position:absolute;left:808px;top:706px;width:699px;height:1px;background:#3b3f44;"></div>
<div style="position:absolute;left:822px;top:720.5px;width:10px;height:10px;border-radius:50%;background:#0e1012"></div>
<div style="position:absolute;left:873px;top:716.13px;font-size:15.5px;line-height:19px;color:#6ea8fe;white-space:nowrap;-webkit-text-stroke-width:0.2px;letter-spacing:0px;text-decoration:underline;text-underline-offset:1.5px;text-decoration-thickness:1.6px;">0</div>
<div style="position:absolute;left:962px;top:716.13px;font-size:15.5px;line-height:19px;color:#6ea8fe;white-space:nowrap;-webkit-text-stroke-width:0.2px;letter-spacing:1px;text-decoration:underline;text-underline-offset:1.5px;text-decoration-thickness:1.6px;">31</div>
<div style="position:absolute;left:1026px;top:717.2px;width:70px;height:19.5px;border-radius:10px;background:#198754;color:#fff;font-weight:bold;font-size:11.6px;line-height:19.5px;text-align:center;letter-spacing:0.55px;-webkit-text-stroke:0.25px #fff">Proposed</div>
<div style="position:absolute;left:1150px;top:716.13px;font-size:15.5px;line-height:19px;color:#c9cfd4;white-space:nowrap;-webkit-text-stroke-width:0.2px;">1 min. ago</div>
<svg style="position:absolute;left:1289px;top:716.6px" width="11" height="17" viewBox="0 0 11 17"><circle cx="5.3" cy="1.9" r="1.6" fill="#b4bac0"/><path d="M3 4.8H7.6C8.1 4.8 8.4 5.1 8.6 5.5L10.3 9.2L9.3 9.8L7.9 7.6V16.4H5.6V11.2H5V16.4H2.7V7.6L1.3 9.8L0.3 9.2L2 5.5C2.2 5.1 2.5 4.8 3 4.8Z" fill="#b4bac0"/></svg>
<div style="position:absolute;left:1303px;top:716.13px;font-size:15.5px;line-height:19px;color:#6ea8fe;white-space:nowrap;-webkit-text-stroke-width:0.2px;letter-spacing:0.3px;text-decoration:underline;text-underline-offset:1.5px;text-decoration-thickness:1.6px;">3-geth-teku</div>
<div style="position:absolute;left:808px;top:745px;width:699px;height:1px;background:#3b3f44;"></div>
<div style="position:absolute;left:822px;top:759.5px;width:10px;height:10px;border-radius:50%;background:#0e1012"></div>
<div style="position:absolute;left:873px;top:755.13px;font-size:15.5px;line-height:19px;color:#6ea8fe;white-space:nowrap;-webkit-text-stroke-width:0.2px;letter-spacing:0px;text-decoration:underline;text-underline-offset:1.5px;text-decoration-thickness:1.6px;">0</div>
<div style="position:absolute;left:962px;top:755.13px;font-size:15.5px;line-height:19px;color:#6ea8fe;white-space:nowrap;-webkit-text-stroke-width:0.2px;letter-spacing:1px;text-decoration:underline;text-underline-offset:1.5px;text-decoration-thickness:1.6px;">30</div>
<div style="position:absolute;left:1026px;top:756.2px;width:70px;height:19.5px;border-radius:10px;background:#198754;color:#fff;font-weight:bold;font-size:11.6px;line-height:19.5px;text-align:center;letter-spacing:0.55px;-webkit-text-stroke:0.25px #fff">Proposed</div>
<div style="position:absolute;left:1150px;top:755.13px;font-size:15.5px;line-height:19px;color:#c9cfd4;white-space:nowrap;-webkit-text-stroke-width:0.2px;">1 min. ago</div>
<svg style="position:absolute;left:1289px;top:755.6px" width="11" height="17" viewBox="0 0 11 17"><circle cx="5.3" cy="1.9" r="1.6" fill="#b4bac0"/><path d="M3 4.8H7.6C8.1 4.8 8.4 5.1 8.6 5.5L10.3 9.2L9.3 9.8L7.9 7.6V16.4H5.6V11.2H5V16.4H2.7V7.6L1.3 9.8L0.3 9.2L2 5.5C2.2 5.1 2.5 4.8 3 4.8Z" fill="#b4bac0"/></svg>
<div style="position:absolute;left:1303px;top:755.13px;font-size:15.5px;line-height:19px;color:#6ea8fe;white-space:nowrap;-webkit-text-stroke-width:0.2px;letter-spacing:0.3px;text-decoration:underline;text-underline-offset:1.5px;text-decoration-thickness:1.6px;">2-geth-lighthouse</div>
<div style="position:absolute;left:808px;top:784px;width:699px;height:1px;background:#3b3f44;"></div>
<div style="position:absolute;left:822px;top:798.5px;width:10px;height:10px;border-radius:50%;background:#0e1012"></div>
<div style="position:absolute;left:873px;top:794.13px;font-size:15.5px;line-height:19px;color:#6ea8fe;white-space:nowrap;-webkit-text-stroke-width:0.2px;letter-spacing:0px;text-decoration:underline;text-underline-offset:1.5px;text-decoration-thickness:1.6px;">0</div>
<div style="position:absolute;left:962px;top:794.13px;font-size:15.5px;line-height:19px;color:#6ea8fe;white-space:nowrap;-webkit-text-stroke-width:0.2px;letter-spacing:1px;text-decoration:underline;text-underline-offset:1.5px;text-decoration-thickness:1.6px;">29</div>
<div style="position:absolute;left:1026px;top:795.2px;width:70px;height:19.5px;border-radius:10px;background:#198754;color:#fff;font-weight:bold;font-size:11.6px;line-height:19.5px;text-align:center;letter-spacing:0.55px;-webkit-text-stroke:0.25px #fff">Proposed</div>
<div style="position:absolute;left:1150px;top:794.13px;font-size:15.5px;line-height:19px;color:#c9cfd4;white-space:nowrap;-webkit-text-stroke-width:0.2px;">1 min. ago</div>
<svg style="position:absolute;left:1289px;top:794.6px" width="11" height="17" viewBox="0 0 11 17"><circle cx="5.3" cy="1.9" r="1.6" fill="#b4bac0"/><path d="M3 4.8H7.6C8.1 4.8 8.4 5.1 8.6 5.5L10.3 9.2L9.3 9.8L7.9 7.6V16.4H5.6V11.2H5V16.4H2.7V7.6L1.3 9.8L0.3 9.2L2 5.5C2.2 5.1 2.5 4.8 3 4.8Z" fill="#b4bac0"/></svg>
<div style="position:absolute;left:1303px;top:794.13px;font-size:15.5px;line-height:19px;color:#6ea8fe;white-space:nowrap;-webkit-text-stroke-width:0.2px;letter-spacing:0.3px;text-decoration:underline;text-underline-offset:1.5px;text-decoration-thickness:1.6px;">1-geth-lighthouse</div>
<div style="position:absolute;left:808px;top:823px;width:699px;height:1px;background:#3b3f44;"></div>
<div style="position:absolute;left:822px;top:837.5px;width:10px;height:10px;border-radius:50%;background:#0e1012"></div>
<div style="position:absolute;left:873px;top:833.13px;font-size:15.5px;line-height:19px;color:#6ea8fe;white-space:nowrap;-webkit-text-stroke-width:0.2px;letter-spacing:0px;text-decoration:underline;text-underline-offset:1.5px;text-decoration-thickness:1.6px;">0</div>
<div style="position:absolute;left:962px;top:833.13px;font-size:15.5px;line-height:19px;color:#6ea8fe;white-space:nowrap;-webkit-text-stroke-width:0.2px;letter-spacing:1px;text-decoration:underline;text-underline-offset:1.5px;text-decoration-thickness:1.6px;">28</div>
<div style="position:absolute;left:1026px;top:834.2px;width:70px;height:19.5px;border-radius:10px;background:#198754;color:#fff;font-weight:bold;font-size:11.6px;line-height:19.5px;text-align:center;letter-spacing:0.55px;-webkit-text-stroke:0.25px #fff">Proposed</div>
<div style="position:absolute;left:1150px;top:833.13px;font-size:15.5px;line-height:19px;color:#c9cfd4;white-space:nowrap;-webkit-text-stroke-width:0.2px;">1 min. ago</div>
<svg style="position:absolute;left:1289px;top:833.6px" width="11" height="17" viewBox="0 0 11 17"><circle cx="5.3" cy="1.9" r="1.6" fill="#b4bac0"/><path d="M3 4.8H7.6C8.1 4.8 8.4 5.1 8.6 5.5L10.3 9.2L9.3 9.8L7.9 7.6V16.4H5.6V11.2H5V16.4H2.7V7.6L1.3 9.8L0.3 9.2L2 5.5C2.2 5.1 2.5 4.8 3 4.8Z" fill="#b4bac0"/></svg>
<div style="position:absolute;left:1303px;top:833.13px;font-size:15.5px;line-height:19px;color:#6ea8fe;white-space:nowrap;-webkit-text-stroke-width:0.2px;letter-spacing:0.3px;text-decoration:underline;text-underline-offset:1.5px;text-decoration-thickness:1.6px;">3-geth-teku</div>
<div style="position:absolute;left:808px;top:862px;width:699px;height:1px;background:#3b3f44;"></div>
<div style="position:absolute;left:822px;top:876.5px;width:10px;height:10px;border-radius:50%;background:#0e1012"></div>
<div style="position:absolute;left:873px;top:872.13px;font-size:15.5px;line-height:19px;color:#6ea8fe;white-space:nowrap;-webkit-text-stroke-width:0.2px;letter-spacing:0px;text-decoration:underline;text-underline-offset:1.5px;text-decoration-thickness:1.6px;">0</div>
<div style="position:absolute;left:962px;top:872.13px;font-size:15.5px;line-height:19px;color:#6ea8fe;white-space:nowrap;-webkit-text-stroke-width:0.2px;letter-spacing:1px;text-decoration:underline;text-underline-offset:1.5px;text-decoration-thickness:1.6px;">27</div>
<div style="position:absolute;left:1026px;top:873.2px;width:70px;height:19.5px;border-radius:10px;background:#198754;color:#fff;font-weight:bold;font-size:11.6px;line-height:19.5px;text-align:center;letter-spacing:0.55px;-webkit-text-stroke:0.25px #fff">Proposed</div>
<div style="position:absolute;left:1150px;top:872.13px;font-size:15.5px;line-height:19px;color:#c9cfd4;white-space:nowrap;-webkit-text-stroke-width:0.2px;">1 min. ago</div>
<svg style="position:absolute;left:1289px;top:872.6px" width="11" height="17" viewBox="0 0 11 17"><circle cx="5.3" cy="1.9" r="1.6" fill="#b4bac0"/><path d="M3 4.8H7.6C8.1 4.8 8.4 5.1 8.6 5.5L10.3 9.2L9.3 9.8L7.9 7.6V16.4H5.6V11.2H5V16.4H2.7V7.6L1.3 9.8L0.3 9.2L2 5.5C2.2 5.1 2.5 4.8 3 4.8Z" fill="#b4bac0"/></svg>
<div style="position:absolute;left:1303px;top:872.13px;font-size:15.5px;line-height:19px;color:#6ea8fe;white-space:nowrap;-webkit-text-stroke-width:0.2px;letter-spacing:0.3px;text-decoration:underline;text-underline-offset:1.5px;text-decoration-thickness:1.6px;">2-geth-lighthouse</div>
<div style="position:absolute;left:808px;top:901px;width:699px;height:1px;background:#3b3f44;"></div>
<div style="position:absolute;left:822px;top:915.5px;width:10px;height:10px;border-radius:50%;background:#0e1012"></div>
<div style="position:absolute;left:873px;top:911.13px;font-size:15.5px;line-height:19px;color:#6ea8fe;white-space:nowrap;-webkit-text-stroke-width:0.2px;letter-spacing:0px;text-decoration:underline;text-underline-offset:1.5px;text-decoration-thickness:1.6px;">0</div>
<div style="position:absolute;left:962px;top:911.13px;font-size:15.5px;line-height:19px;color:#6ea8fe;white-space:nowrap;-webkit-text-stroke-width:0.2px;letter-spacing:1px;text-decoration:underline;text-underline-offset:1.5px;text-decoration-thickness:1.6px;">26</div>
<div style="position:absolute;left:1026px;top:912.2px;width:70px;height:19.5px;border-radius:10px;background:#198754;color:#fff;font-weight:bold;font-size:11.6px;line-height:19.5px;text-align:center;letter-spacing:0.55px;-webkit-text-stroke:0.25px #fff">Proposed</div>
<div style="position:absolute;left:1150px;top:911.13px;font-size:15.5px;line-height:19px;color:#c9cfd4;white-space:nowrap;-webkit-text-stroke-width:0.2px;">2 min. ago</div>
<svg style="position:absolute;left:1289px;top:911.6px" width="11" height="17" viewBox="0 0 11 17"><circle cx="5.3" cy="1.9" r="1.6" fill="#b4bac0"/><path d="M3 4.8H7.6C8.1 4.8 8.4 5.1 8.6 5.5L10.3 9.2L9.3 9.8L7.9 7.6V16.4H5.6V11.2H5V16.4H2.7V7.6L1.3 9.8L0.3 9.2L2 5.5C2.2 5.1 2.5 4.8 3 4.8Z" fill="#b4bac0"/></svg>
<div style="position:absolute;left:1303px;top:911.13px;font-size:15.5px;line-height:19px;color:#6ea8fe;white-space:nowrap;-webkit-text-stroke-width:0.2px;letter-spacing:0.3px;text-decoration:underline;text-underline-offset:1.5px;text-decoration-thickness:1.6px;">2-geth-lighthouse</div>
<div style="position:absolute;left:808px;top:940px;width:699px;height:1px;background:#3b3f44;"></div>
<div style="position:absolute;left:822px;top:954.5px;width:10px;height:10px;border-radius:50%;background:#0e1012"></div>
<div style="position:absolute;left:873px;top:950.13px;font-size:15.5px;line-height:19px;color:#6ea8fe;white-space:nowrap;-webkit-text-stroke-width:0.2px;letter-spacing:0px;text-decoration:underline;text-underline-offset:1.5px;text-decoration-thickness:1.6px;">0</div>
<div style="position:absolute;left:962px;top:950.13px;font-size:15.5px;line-height:19px;color:#6ea8fe;white-space:nowrap;-webkit-text-stroke-width:0.2px;letter-spacing:1px;text-decoration:underline;text-underline-offset:1.5px;text-decoration-thickness:1.6px;">25</div>
<div style="position:absolute;left:1026px;top:951.2px;width:70px;height:19.5px;border-radius:10px;background:#198754;color:#fff;font-weight:bold;font-size:11.6px;line-height:19.5px;text-align:center;letter-spacing:0.55px;-webkit-text-stroke:0.25px #fff">Proposed</div>
<div style="position:absolute;left:1150px;top:950.13px;font-size:15.5px;line-height:19px;color:#c9cfd4;white-space:nowrap;-webkit-text-stroke-width:0.2px;">2 min. ago</div>
<svg style="position:absolute;left:1289px;top:950.6px" width="11" height="17" viewBox="0 0 11 17"><circle cx="5.3" cy="1.9" r="1.6" fill="#b4bac0"/><path d="M3 4.8H7.6C8.1 4.8 8.4 5.1 8.6 5.5L10.3 9.2L9.3 9.8L7.9 7.6V16.4H5.6V11.2H5V16.4H2.7V7.6L1.3 9.8L0.3 9.2L2 5.5C2.2 5.1 2.5 4.8 3 4.8Z" fill="#b4bac0"/></svg>
<div style="position:absolute;left:1303px;top:950.13px;font-size:15.5px;line-height:19px;color:#6ea8fe;white-space:nowrap;-webkit-text-stroke-width:0.2px;letter-spacing:0.3px;text-decoration:underline;text-underline-offset:1.5px;text-decoration-thickness:1.6px;">1-geth-lighthouse</div>
</div></body></html>
